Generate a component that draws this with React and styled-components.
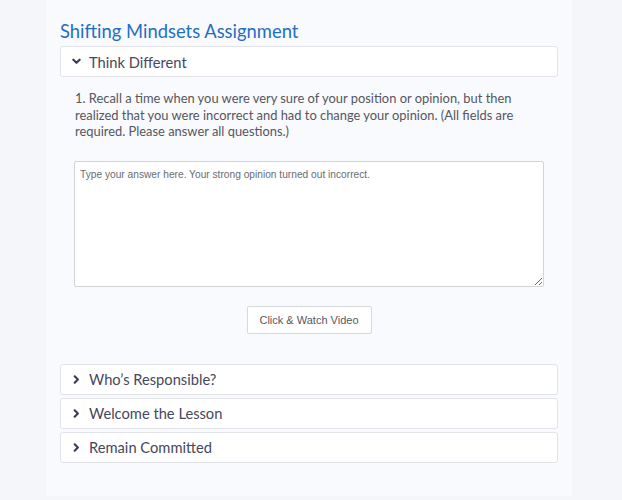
import React from 'react';
import styled, { createGlobalStyle } from 'styled-components';

const Global = createGlobalStyle`
  html, body {
    margin: 0;
    padding: 0;
    background: #f5f6fa;
  }
  body {
    font-family: Lato, "Open Sans", sans-serif;
  }
`;

const Panel = styled.section`
  margin-left: 46px;
  width: 526px;
  height: 496px;
  box-sizing: border-box;
  background: #f9fafd;
  padding: 19px 14px 0 14px;
`;

const Title = styled.h2`
  margin: 0 0 3px 0;
  font-size: 18.4px;
  line-height: 24px;
  font-weight: 400;
  color: #1f6ec4;
`;

const List = styled.div`
  display: flex;
  flex-direction: column;
  gap: 3px;
`;

const Header = styled.div`
  display: flex;
  align-items: center;
  height: 31px;
  box-sizing: border-box;
  background: #fff;
  border: 1px solid #e2e3e8;
  border-radius: 3px;
  padding-left: 11px;
  font-size: 14.7px;
  color: #46475d;
`;

const Chevron = styled.svg`
  width: 9px;
  height: 9px;
  margin-right: 8px;
  flex: none;
  fill: none;
  stroke: #3b3c55;
  stroke-width: 2.4;
  stroke-linecap: round;
  stroke-linejoin: round;
`;

const Body = styled.div`
  padding: 13px 14px 30px 14px;
  display: flex;
  flex-direction: column;
  align-items: center;
`;

const Question = styled.p`
  align-self: stretch;
  margin: 0 0 21px 1px;
  font-size: 12.9px;
  line-height: 16.5px;
  color: #55565e;
`;

const Answer = styled.textarea`
  display: block;
  align-self: stretch;
  height: 126px;
  box-sizing: border-box;
  margin: 0 0 19px 0;
  padding: 7px 5px;
  border: 1px solid #d3d4d8;
  border-radius: 2px;
  background: #fff;
  font-family: "Liberation Sans", Arial, sans-serif;
  font-size: 10.2px;
  resize: vertical;

  &::placeholder {
    color: #6a6b70;
  }
`;

const WatchButton = styled.button`
  width: 125px;
  height: 28px;
  background: #fff;
  border: 1px solid #d8d9dd;
  border-radius: 2px;
  font-family: "Liberation Sans", Arial, sans-serif;
  font-size: 11px;
  color: #56575f;
`;

const Down = () => (
  <Chevron viewBox="0 0 10 10">
    <polyline points="1.5,3 5,6.5 8.5,3" />
  </Chevron>
);

const Right = () => (
  <Chevron viewBox="0 0 10 10">
    <polyline points="3,1.5 6.5,5 3,8.5" />
  </Chevron>
);

const sections = ["Who’s Responsible?", 'Welcome the Lesson', 'Remain Committed'];

export default function App() {
  return (
    <>
      <Global />
      <Panel>
        <Title>Shifting Mindsets Assignment</Title>
        <Header>
          <Down />
          Think Different
        </Header>
        <Body>
          <Question>
            1. Recall a time when you were very sure of your position or opinion, but then
            realized that you were incorrect and had to change your opinion. (All fields are
            required. Please answer all questions.)
          </Question>
          <Answer placeholder="Type your answer here. Your strong opinion turned out incorrect." />
          <WatchButton type="button">Click &amp; Watch Video</WatchButton>
        </Body>
        <List>
          {sections.map((s) => (
            <Header key={s}>
              <Right />
              {s}
            </Header>
          ))}
        </List>
      </Panel>
    </>
  );
}
